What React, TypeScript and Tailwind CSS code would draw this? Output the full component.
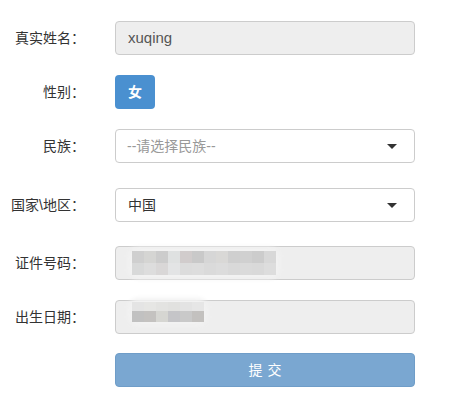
import React from "react";

const font = { fontFamily: '"Liberation Sans", "Noto Sans CJK SC", sans-serif' };

const idTop = ["#cfcfcf", "#d5d5d3", "#cccccc", "#dfe1e1", "#d1cccc", "#c9c9c9", "#d6d6d6", "#d9d8d6", "#cfcfcf", "#d0d0d0", "#cccccc", "#d8d8d8"];
const idBot = ["#d8d9d9", "#dddddd", "#d9d7d7", "#e3e4e5", "#dcdcdc", "#dddddd", "#dadada", "#dcdcdc", "#d9d9d9", "#dadada", "#d9d9d9", "#dddddd"];
const bdTop = ["#e4e4e4", "#e6e6e4", "#e3e3e1", "#e1e1df", "#e3e3e3", "#e6e6e6"];
const bdBot = ["#c1c1c1", "#c4c2c0", "#d6d6d2", "#c5c5c8", "#c9c9c9", "#c3c1bf"];

function Mosaic({ rows, heights }: { rows: string[][]; heights: number[] }) {
  return (
    <div className="flex flex-col rounded-[6px] shadow-[0_0_5px_4px_#f2f2f2]">
      {rows.map((r, i) => (
        <div key={i} className="flex">
          {r.map((c, j) => (
            <div key={j} className="w-[12px]" style={{ background: c, height: heights[i] }} />
          ))}
        </div>
      ))}
    </div>
  );
}

function Label({ children }: { children: React.ReactNode }) {
  return <div className="w-[85px] shrink-0 text-right text-[14px] text-[#333]">{children}</div>;
}

function Caret() {
  return <div className="h-0 w-0 border-l-[5px] border-r-[5px] border-t-[5px] border-l-transparent border-r-transparent border-t-[#333]" />;
}

export default function App() {
  return (
    <div className="h-[412px] w-[473px] bg-white" style={font}>
      <div className="flex flex-col pt-[21px]">
        <div className="flex h-[34px] items-center">
          <Label>真实姓名：</Label>
          <div className="ml-[30px] flex h-[34px] w-[300px] items-center rounded-[4px] border border-[#ccc] bg-[#eee] px-[12px] text-[15px] text-[#555]">
            xuqing
          </div>
        </div>

        <div className="mt-[20px] flex h-[34px] items-center">
          <Label>性别：</Label>
          <div className="ml-[30px] flex h-[34px] w-[40px] items-center justify-center rounded-[4px] bg-[#4a90d0] text-[14px] font-bold text-white">
            女
          </div>
        </div>

        <div className="mt-[20px] flex h-[34px] items-center">
          <Label>民族：</Label>
          <div className="ml-[30px] flex h-[34px] w-[300px] items-center justify-between rounded-[4px] border border-[#ccc] bg-white pl-[11px] pr-[17px] text-[14px] text-[#999]">
            <span>--请选择民族--</span>
            <Caret />
          </div>
        </div>

        <div className="mt-[25px] flex h-[34px] items-center">
          <Label>国家\地区：</Label>
          <div className="ml-[30px] flex h-[34px] w-[300px] items-center justify-between rounded-[4px] border border-[#ccc] bg-white pl-[12px] pr-[17px] text-[14px] text-[#333]">
            <span>中国</span>
            <Caret />
          </div>
        </div>

        <div className="mt-[24px] flex h-[34px] items-center">
          <Label>证件号码：</Label>
          <div className="ml-[30px] flex h-[34px] w-[300px] items-center rounded-[4px] border border-[#ccc] bg-[#eee] pl-[16px]">
            <Mosaic rows={[idTop, idBot]} heights={[12, 12]} />
          </div>
        </div>

        <div className="mt-[20px] flex h-[34px] items-center">
          <Label>出生日期：</Label>
          <div className="ml-[30px] flex h-[34px] w-[300px] items-start rounded-[4px] border border-[#ccc] bg-[#eee] pl-[16px] pt-[1px]">
            <Mosaic rows={[bdTop, bdBot]} heights={[9, 11]} />
          </div>
        </div>

        <div className="mt-[19px] flex h-[34px] items-center">
          <div className="w-[85px] shrink-0" />
          <div className="ml-[30px] flex h-[34px] w-[300px] items-center justify-center rounded-[4px] border border-[#6f9dc8] bg-[#7aa7d1] pl-[5px] text-[14px] tracking-[5px] text-white">
            提交
          </div>
        </div>
      </div>
    </div>
  );
}
